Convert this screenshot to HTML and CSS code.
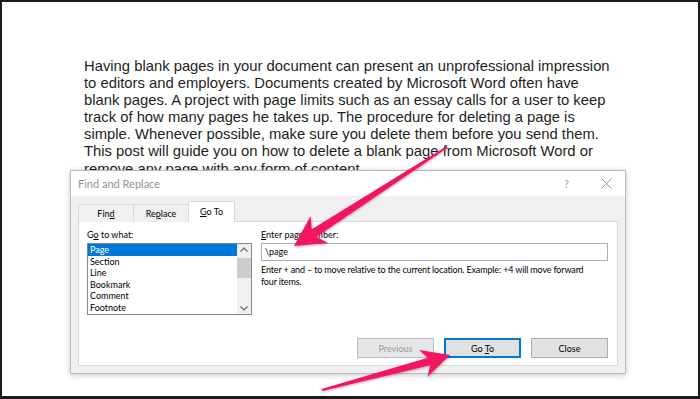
FILE: index.html
```html
<!DOCTYPE html>
<html>
<head>
<meta charset="utf-8">
<link rel="stylesheet" href="styles.css">
</head>
<body>
<div class="page">
  <p class="doc">Having blank pages in your document can present an unprofessional impression<br>to editors and employers. Documents created by Microsoft Word often have<br>blank pages. A project with page limits such as an essay calls for a user to keep<br>track of how many pages he takes up. The procedure for deleting a page is<br>simple. Whenever possible, make sure you delete them before you send them.<br>This post will guide you on how to delete a blank page from Microsoft Word or<br>remove any page with any form of content.</p>

  <div class="dialog">
    <div class="titlebar">
      <span class="title">Find and Replace</span>
      <span class="tb-help">?</span>
      <svg class="tb-close" width="11" height="11" viewBox="0 0 11 11"><path d="M0.5 0.5 L10.5 10.5 M10.5 0.5 L0.5 10.5" stroke="#9a9a9a" stroke-width="1" fill="none"/></svg>
    </div>
    <div class="dbody">
      <div class="tabs">
        <div class="tab tab-find"><span>Fin<u>d</u></span></div>
        <div class="tab tab-replace"><span>Re<u>p</u>lace</span></div>
        <div class="tab tab-goto active"><span><u>G</u>o To</span></div>
      </div>
      <div class="panel">
        <div class="fields">
          <div class="col-left">
            <div class="label">G<u>o</u> to what:</div>
            <div class="listbox">
              <ul class="items">
                <li class="sel">Page</li>
                <li>Section</li>
                <li>Line</li>
                <li>Bookmark</li>
                <li>Comment</li>
                <li>Footnote</li>
              </ul>
              <div class="scrollbar">
                <svg class="sb-arrow" width="14" height="12" viewBox="0 0 14 12"><path d="M3.5 7.5 L7 4 L10.5 7.5" stroke="#606060" stroke-width="1.1" fill="none"/></svg>
                <div class="sb-thumb"></div>
                <div class="sb-track"></div>
                <svg class="sb-arrow" width="14" height="12" viewBox="0 0 14 12"><path d="M3.5 4.5 L7 8 L10.5 4.5" stroke="#606060" stroke-width="1.1" fill="none"/></svg>
              </div>
            </div>
          </div>
          <div class="col-right">
            <div class="label"><u>E</u>nter page number:</div>
            <div class="input">\page</div>
            <p class="hint">Enter + and – to move relative to the current location. Example: +4 will move forward<br>four items.</p>
          </div>
        </div>
        <div class="buttons">
          <div class="btn disabled"><span>Previous</span></div>
          <div class="btn default"><span>Go <u>T</u>o</span></div>
          <div class="btn"><span>Close</span></div>
        </div>
      </div>
    </div>
  </div>

  <svg class="arrows" width="696" height="394" viewBox="2 2 696 394">
    <defs>
      <filter id="sh" x="-10%" y="-10%" width="120%" height="120%">
        <feDropShadow dx="0.5" dy="1" stdDeviation="0.8" flood-color="#7a0030" flood-opacity="0.35"/>
      </filter>
    </defs>
    <polygon filter="url(#sh)" fill="#f2185f" points="294,246 327.9,243.1 316.6,236.8 447.5,147.8 446.5,146.2 311.8,229.2 310.5,216.2"/>
    <polygon filter="url(#sh)" fill="#f2185f" points="450,355 419.1,349.9 427.8,357.7 321.7,389 322.3,391 430.2,365.3 427.5,376.7"/>
  </svg>
</div>
</body>
</html>
```
FILE: styles.css
```css
html, body {
  margin: 0;
  padding: 0;
  background: #fff;
}
.page {
  position: relative;
  width: 700px;
  height: 399px;
  box-sizing: border-box;
  border: 2px solid #1b1b1b;
  border-bottom-width: 3px;
  background: #fff;
  overflow: hidden;
}
.doc {
  margin: 0;
  padding: 56px 0 0 82px;
  font-family: "Liberation Sans", Arial, sans-serif;
  font-size: 14.8px;
  line-height: 17.1px;
  color: #1e1e1e;
  white-space: nowrap;
}
.dialog {
  position: absolute;
  left: 68px;
  top: 168px;
  width: 556px;
  height: 204px;
  box-sizing: border-box;
  border: 1px solid #b9b9b9;
  background: #f0f0f0;
  box-shadow: 0 1px 6px rgba(0,0,0,0.22);
  display: flex;
  flex-direction: column;
  font-family: Lato, "Noto Sans", sans-serif;
  font-size: 9px;
  color: #000;
}
.titlebar {
  height: 25px;
  background: #fff;
  display: flex;
  align-items: center;
  padding: 0 13px 0 7px;
}
.title {
  flex: 1;
  font-size: 11px;
  color: #939393;
}
.tb-help {
  color: #a0a0a0;
  font-size: 11px;
  margin-right: 32px;
}
.dbody {
  flex: 1;
  display: flex;
  flex-direction: column;
  padding: 6px 7px 7px 7px;
}
.tabs {
  display: flex;
  align-items: flex-end;
  height: 20px;
  position: relative;
  z-index: 1;
  margin-bottom: -1px;
}
.tab {
  box-sizing: border-box;
  height: 18px;
  border: 1px solid #d9d9d9;
  border-bottom: none;
  display: flex;
  align-items: center;
  justify-content: center;
  background: #f0f0f0;
  margin-right: -1px;
}
.tab-find { width: 56px; }
.tab-replace { width: 56px; }
.tab-goto { width: 47px; }
.tab.active {
  height: 21px;
  background: #fff;
  padding-bottom: 2px;
}
.panel {
  flex: 1;
  background: #fff;
  border: 1px solid #d9d9d9;
  display: flex;
  flex-direction: column;
  padding: 7px 9px 7px 8px;
}
.fields {
  display: flex;
  gap: 9px;
}
.col-left {
  width: 165px;
  flex: none;
}
.col-right {
  flex: 1;
}
.label {
  height: 12px;
  line-height: 12px;
  margin-bottom: 2px;
}
.listbox {
  box-sizing: border-box;
  height: 72px;
  border: 1px solid #828790;
  display: flex;
}
.items {
  list-style: none;
  margin: 0;
  padding: 0;
  flex: 1;
}
.items li {
  height: 11.5px;
  line-height: 11.5px;
  padding-left: 2px;
}
.items li.sel {
  background: #0078d7;
  color: #fff;
}
.scrollbar {
  width: 14px;
  background: #f0f0f0;
  display: flex;
  flex-direction: column;
}
.sb-arrow {
  display: block;
  flex: none;
}
.sb-thumb {
  height: 20px;
  margin-top: 2px;
  background: #cdcdcd;
}
.sb-track {
  flex: 1;
}
.input {
  box-sizing: border-box;
  height: 18px;
  border: 1px solid #abadb3;
  line-height: 16px;
  padding-left: 3px;
}
.hint {
  margin: 3px 0 0;
  line-height: 12px;
  white-space: nowrap;
  font-size: 9px;
  letter-spacing: -0.15px;
}
.buttons {
  margin-top: auto;
  display: flex;
  justify-content: flex-end;
  gap: 10px;
}
.btn {
  box-sizing: border-box;
  width: 77px;
  height: 20px;
  border: 1px solid #adadad;
  background: #e1e1e1;
  display: flex;
  align-items: center;
  justify-content: center;
}
.btn.disabled {
  border-color: #bfbfbf;
  background: #e6e6e6;
  color: #9a9a9a;
}
.btn.default {
  border: 2px solid #0078d7;
}
.arrows {
  position: absolute;
  left: 0;
  top: 0;
  pointer-events: none;
}
```
